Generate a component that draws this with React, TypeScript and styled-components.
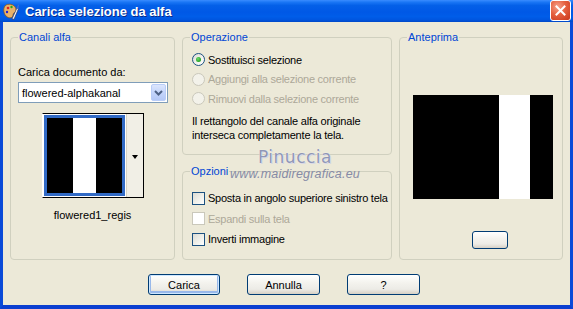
import React from "react";
import styled, { createGlobalStyle, css } from "styled-components";

const GlobalStyle = createGlobalStyle`
  html, body { margin: 0; padding: 0; background: #ECE9D8; }
  body {
    font-family: "Liberation Sans", Arial, sans-serif;
    font-size: 11px;
    color: #000;
  }
`;

const Window = styled.div`
  width: 573px;
  height: 309px;
  display: flex;
  flex-direction: column;
  overflow: hidden;
`;

const TitleBar = styled.div`
  height: 22px;
  flex: none;
  display: flex;
  align-items: center;
  padding-left: 3px;
  background: linear-gradient(
    to bottom,
    #3a8cff 0%,
    #1a76f5 10%,
    #0460e8 25%,
    #0058e6 55%,
    #005de9 75%,
    #0055df 90%,
    #0048c8 100%
  );
`;

const TitleText = styled.span`
  margin-left: 6px;
  font-family: "Liberation Sans", Arial, sans-serif;
  font-weight: bold;
  font-size: 13px;
  color: #fff;
  text-shadow: 1px 1px 0 #0a2a8a;
`;

const CloseButton = styled.div`
  margin-left: auto;
  margin-right: 2px;
  align-self: flex-start;
  width: 21px;
  height: 21px;
  box-sizing: border-box;
  border: 1px solid #fff;
  border-radius: 3px;
  background: radial-gradient(circle at 35% 30%, #f6a28c 0%, #e5603f 45%, #c9361a 100%);
  display: flex;
  align-items: center;
  justify-content: center;
`;

const Body = styled.div`
  position: relative;
  flex: 1;
  background: #ece9d8;
  border-left: 3px solid #0a4ad8;
  border-right: 3px solid #0a4ad8;
  border-bottom: 4px solid #0b3fd0;
  padding: 8px 7px 0 7px;
  display: flex;
  flex-direction: column;
`;

const Columns = styled.div`
  display: grid;
  grid-template-columns: 165px 210px 164px;
  column-gap: 7px;
  height: 230px;
`;

const Stack = styled.div`
  display: flex;
  flex-direction: column;
  gap: 9px;
  min-height: 0;
`;

const Group = styled.fieldset<{ $height?: number; $grow?: boolean }>`
  margin: 0;
  padding: 0 7px;
  min-width: 0;
  border: 1px solid #d0d0bf;
  border-radius: 4px;
  display: flex;
  flex-direction: column;
  box-sizing: border-box;
  ${(p) => p.$height && css`height: ${p.$height}px; flex: none;`}
  ${(p) => p.$grow && css`flex: 1;`}
`;

const Legend = styled.legend`
  padding: 0 1px;
  color: #0046d5;
  font-size: 11px;
  line-height: 14px;
`;

const Label = styled.div<{ $top?: number }>`
  line-height: 14px;
  margin-top: ${(p) => p.$top ?? 0}px;
  white-space: nowrap;
`;

const Combo = styled.div`
  margin-top: 3px;
  width: 150px;
  height: 21px;
  box-sizing: border-box;
  border: 1px solid #7f9db9;
  background: #fff;
  display: flex;
  align-items: center;
  padding: 0 1px 0 3px;
`;

const ComboText = styled.span`
  flex: 1;
  line-height: 14px;
`;

const ComboButton = styled.div`
  width: 15px;
  height: 17px;
  box-sizing: border-box;
  border: 1px solid #b9cdf8;
  border-radius: 2px;
  background: linear-gradient(to bottom, #dce6fd 0%, #c4d5fb 50%, #b4c8f6 100%);
  display: flex;
  align-items: center;
  justify-content: center;
`;

const ThumbFrame = styled.div`
  margin-top: 10px;
  align-self: center;
  display: flex;
  border: 1px solid #000;
  border-left-color: #fff;
`;

const ThumbCell = styled.div`
  background: #fff;
  padding: 1px;
`;

const Stripes = styled.div<{ $w: number; $h: number; $from: number; $to: number; $border?: boolean }>`
  width: ${(p) => p.$w}px;
  height: ${(p) => p.$h}px;
  background: linear-gradient(
    to right,
    #000 ${(p) => p.$from}px,
    #fff ${(p) => p.$from}px,
    #fff ${(p) => p.$to}px,
    #000 ${(p) => p.$to}px
  );
  ${(p) => p.$border && css`border: 3px solid #316ac5;`}
`;

const ThumbStrip = styled.div`
  width: 17px;
  background: #f1efe6;
  border-left: 1px solid #d8d5c6;
  display: flex;
  align-items: center;
  justify-content: center;
  padding-top: 3px;
  box-sizing: border-box;
`;

const SmallArrow = styled.div`
  width: 0;
  height: 0;
  border-left: 3.5px solid transparent;
  border-right: 3.5px solid transparent;
  border-top: 4px solid #000;
`;

const Caption = styled.div`
  margin-top: 10px;
  text-align: center;
  line-height: 14px;
`;

const OptionList = styled.div<{ $top: number; $row: number }>`
  margin-top: ${(p) => p.$top}px;
  padding-left: 2px;
  display: grid;
  grid-auto-rows: ${(p) => p.$row}px;
`;

const Option = styled.label<{ $disabled?: boolean }>`
  display: flex;
  align-items: center;
  gap: 3px;
  white-space: nowrap;
  letter-spacing: -0.25px;
  color: ${(p) => (p.$disabled ? "#aca899" : "#000")};
`;

const RadioMark = styled.span<{ $disabled?: boolean; $checked?: boolean }>`
  width: 13px;
  height: 13px;
  box-sizing: border-box;
  border-radius: 50%;
  flex: none;
  border: 1px solid ${(p) => (p.$disabled ? "#cac8bb" : "#1c5180")};
  background: ${(p) =>
    p.$disabled ? "#f3f2ea" : "linear-gradient(135deg, #dcdcd5 0%, #f4f4f0 60%, #fff 100%)"};
  display: flex;
  align-items: center;
  justify-content: center;
  &::after {
    content: "";
    display: ${(p) => (p.$checked ? "block" : "none")};
    width: 5px;
    height: 5px;
    border-radius: 50%;
    background: radial-gradient(circle at 40% 35%, #6fdc6f 0%, #21a121 70%);
  }
`;

const CheckMark = styled.span<{ $disabled?: boolean }>`
  width: 13px;
  height: 13px;
  box-sizing: border-box;
  flex: none;
  border: 1px solid ${(p) => (p.$disabled ? "#cac8bb" : "#1c5180")};
  background: ${(p) =>
    p.$disabled ? "#fff" : "linear-gradient(135deg, #dcdcd5 0%, #eeeee8 50%, #fff 100%)"};
`;

const Note = styled.div`
  margin-top: 5px;
  padding-left: 2px;
  line-height: 14px;
  letter-spacing: -0.2px;
`;

const PreviewArea = styled.div`
  padding-left: 6px;
  display: flex;
  flex-direction: column;
  align-items: flex-start;
`;

const PreviewSpacer = styled.div`
  height: 51px;
`;

const XpButton = styled.button<{ $w: number; $h: number; $focused?: boolean }>`
  width: ${(p) => p.$w}px;
  height: ${(p) => p.$h}px;
  box-sizing: border-box;
  border: 1px solid #003c74;
  border-radius: 3px;
  padding: 0;
  font-family: "Liberation Sans", Arial, sans-serif;
  font-size: 11px;
  color: #000;
  background: linear-gradient(to bottom, #fff 0%, #f4f3ee 40%, #ecebe6 75%, #d6d0c5 100%);
  ${(p) =>
    p.$focused &&
    css`
      box-shadow: inset 0 0 0 1px #cee7ff, inset 0 -1px 0 2px #98b8ea;
    `}
`;

const PreviewButton = styled(XpButton)`
  margin-top: 32px;
  margin-left: 59px;
`;

const ButtonRow = styled.div`
  margin-top: 14px;
  padding-left: 138px;
  display: flex;
  gap: 27px;
`;

const Watermark = styled.div`
  position: absolute;
  left: 227px;
  top: 125px;
  display: flex;
  flex-direction: column;
  align-items: center;
  pointer-events: none;
`;

const WatermarkName = styled.span`
  font-family: "DejaVu Sans", sans-serif;
  font-size: 17px;
  line-height: 20px;
  letter-spacing: 0.5px;
  color: #8f96b6;
  text-shadow: 0 0 1px #fff, 1px 1px 0 #d6d6e4;
`;

const WatermarkUrl = styled.span`
  font-family: "Liberation Sans", Arial, sans-serif;
  font-style: italic;
  font-size: 12.5px;
  line-height: 14px;
  color: #868ba6;
  letter-spacing: 0.2px;
`;

const AppIcon = () => (
  <svg width="16" height="17" viewBox="0 0 16 17">
    <path d="M3 2 C7 0 13 2 13 7 C13 10 10 9 10 12 C10 15 6 16 3 13 C0 10 0 4 3 2 Z" fill="#e9b26a" stroke="#8a5a20" strokeWidth="0.8" />
    <circle cx="5" cy="5" r="1.3" fill="#d22" />
    <circle cx="8.5" cy="4" r="1.2" fill="#2a2" />
    <circle cx="4" cy="9" r="1.2" fill="#22c" />
    <path d="M9 16 L14 5 L15.5 5.6 L11 16.3 Z" fill="#fff" stroke="#335" strokeWidth="0.6" />
    <path d="M13.6 5.5 L15 1.5 L16 2 L15.3 6 Z" fill="#3a6fd8" />
  </svg>
);

const CloseX = () => (
  <svg width="11" height="11" viewBox="0 0 11 11">
    <path d="M1.5 1.5 L9.5 9.5 M9.5 1.5 L1.5 9.5" stroke="#fff" strokeWidth="2" strokeLinecap="square" />
  </svg>
);

const Chevron = () => (
  <svg width="9" height="6" viewBox="0 0 9 6">
    <path d="M1 1 L4.5 4.5 L8 1" fill="none" stroke="#4d6185" strokeWidth="2" />
  </svg>
);

export default function App() {
  return (
    <>
      <GlobalStyle />
      <Window>
        <TitleBar>
          <AppIcon />
          <TitleText>Carica selezione da alfa</TitleText>
          <CloseButton>
            <CloseX />
          </CloseButton>
        </TitleBar>
        <Body>
          <Columns>
            <Group>
              <Legend>Canali alfa</Legend>
              <Label $top={21}>Carica documento da:</Label>
              <Combo>
                <ComboText>flowered-alphakanal</ComboText>
                <ComboButton>
                  <Chevron />
                </ComboButton>
              </Combo>
              <ThumbFrame>
                <ThumbCell>
                  <Stripes $w={75} $h={75} $from={26} $to={49} $border />
                </ThumbCell>
                <ThumbStrip>
                  <SmallArrow />
                </ThumbStrip>
              </ThumbFrame>
              <Caption>flowered1_regis</Caption>
            </Group>

            <Stack>
              <Group $height={125}>
                <Legend>Operazione</Legend>
                <OptionList $top={6} $row={19.5}>
                  <Option>
                    <RadioMark $checked />
                    Sostituisci selezione
                  </Option>
                  <Option $disabled>
                    <RadioMark $disabled />
                    Aggiungi alla selezione corrente
                  </Option>
                  <Option $disabled>
                    <RadioMark $disabled />
                    Rimuovi dalla selezione corrente
                  </Option>
                </OptionList>
                <Note>
                  Il rettangolo del canale alfa originale
                  <br />
                  interseca completamente la tela.
                </Note>
              </Group>
              <Group $grow>
                <Legend>Opzioni</Legend>
                <OptionList $top={10} $row={20.5}>
                  <Option>
                    <CheckMark />
                    Sposta in angolo superiore sinistro tela
                  </Option>
                  <Option $disabled>
                    <CheckMark $disabled />
                    Espandi sulla tela
                  </Option>
                  <Option>
                    <CheckMark />
                    Inverti immagine
                  </Option>
                </OptionList>
              </Group>
            </Stack>

            <Group>
              <Legend>Anteprima</Legend>
              <PreviewArea>
                <PreviewSpacer />
                <Stripes $w={140} $h={104} $from={86} $to={117} />
                <PreviewButton $w={36} $h={18} />
              </PreviewArea>
            </Group>
          </Columns>

          <ButtonRow>
            <XpButton $w={72} $h={21} $focused>
              Carica
            </XpButton>
            <XpButton $w={73} $h={21}>
              Annulla
            </XpButton>
            <XpButton $w={73} $h={21}>
              ?
            </XpButton>
          </ButtonRow>

          <Watermark>
            <WatermarkName>Pinuccia</WatermarkName>
            <WatermarkUrl>www.maidiregrafica.eu</WatermarkUrl>
          </Watermark>
        </Body>
      </Window>
    </>
  );
}
